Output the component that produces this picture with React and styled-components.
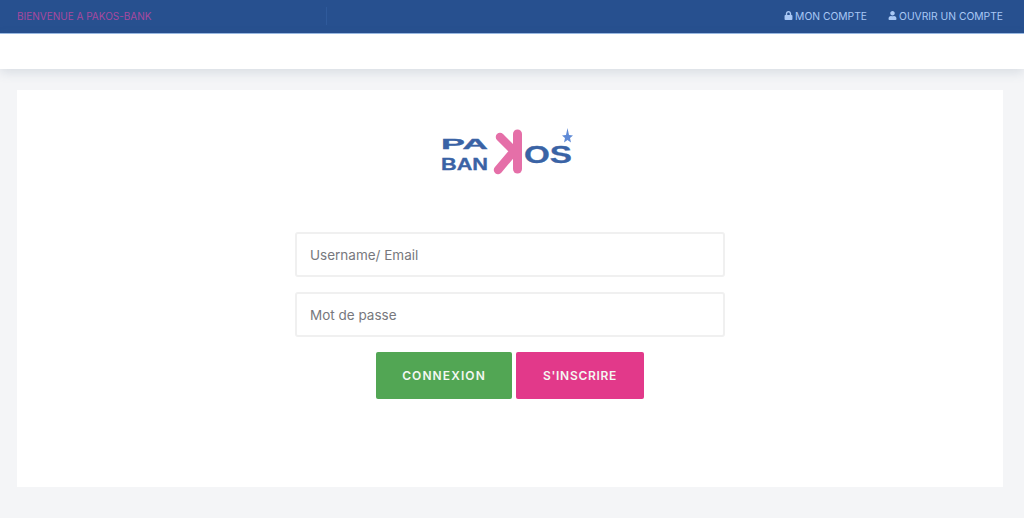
import styled, { createGlobalStyle } from 'styled-components';
import { FaLock, FaUser } from 'react-icons/fa';

const GlobalStyle = createGlobalStyle`
  body {
    margin: 0;
    background-color: #f4f5f7;
    font-family: Inter, "Open Sans", sans-serif;
  }
`;

function Logo() {
  return (
    <LogoSvg viewBox='0 0 135 48' width='135' height='48' role='img' aria-label='Pakos Bank'>
      <g fill='#3a63a5' stroke='#3a63a5' strokeWidth='0.3' fontFamily='"Liberation Sans", sans-serif' fontWeight='700'>
        <text x='1' y='21' fontSize='15' textLength='47' lengthAdjust='spacingAndGlyphs'>PA</text>
        <text x='1' y='42' fontSize='16' textLength='47' lengthAdjust='spacingAndGlyphs'>BAN</text>
        <text x='84' y='35' fontSize='23' textLength='48' lengthAdjust='spacingAndGlyphs'>OS</text>
      </g>
      <g stroke='#e56fa8' fill='none' strokeLinecap='round'>
        <path d='M60 9l14 14L58 42' strokeWidth='8.500' strokeLinejoin='round' />
        <path d='M77.500 6v35' strokeWidth='9' />
      </g>
      <path d='M127.500 0l1.500 7 4 .5-3 2.600 1 4.400-3.500-2.500-3.500 2.500 1-4.400-3-2.600 4-.5z' fill='#5f8ad6' />
    </LogoSvg>
  );
}

export default function App() {
  return (
    <>
      <GlobalStyle />
      <TopBar>
        <Welcome>BIENVENUE A PAKOS-BANK</Welcome>
        <TopDivider />
        <TopLinks>
          <TopLink href='#'>
            <FaLock size={9} />
            MON COMPTE
          </TopLink>
          <TopLink href='#'>
            <FaUser size={9} />
            OUVRIR UN COMPTE
          </TopLink>
        </TopLinks>
      </TopBar>
      <NavBar />
      <Main>
        <Card>
          <Logo />
          <Form>
            <Field placeholder='Username/ Email' />
            <Field placeholder='Mot de passe' type='password' />
            <Buttons>
              <ActionButton type='button' $bg='#52a654' $width={136} $spacing={1.1}>
                CONNEXION
              </ActionButton>
              <ActionButton type='button' $bg='#e2398a' $width={128} $spacing={0.7}>
                S&apos;INSCRIRE
              </ActionButton>
            </Buttons>
          </Form>
        </Card>
      </Main>
    </>
  );
}

const TopBar = styled.header`
  display: flex;
  align-items: center;
  height: 31px;
  padding: 0 21px 2px 17px;
  background-color: #27508f;
  border-bottom: 1px solid #9dbde6;
`;

const Welcome = styled.span`
  width: 309px;
  color: #a8499f;
  font-size: 10px;
  white-space: nowrap;
`;

const TopDivider = styled.div`
  width: 1px;
  height: 18px;
  background-color: #2f5a9b;
`;

const TopLinks = styled.nav`
  display: flex;
  gap: 21px;
  margin-left: auto;
`;

const TopLink = styled.a`
  display: flex;
  align-items: center;
  gap: 2px;
  color: #a9c8f5;
  font-size: 10.300px;
  text-decoration: none;
  white-space: nowrap;
`;

const NavBar = styled.div`
  height: 35px;
  background-color: #fff;
  box-shadow: 0 3px 12px rgba(80, 100, 130, 0.18);
`;

const Main = styled.main`
  padding: 21px 21px 31px 17px;
`;

const Card = styled.section`
  display: flex;
  flex-direction: column;
  align-items: center;
  height: 397px;
  padding-top: 38px;
  box-sizing: border-box;
  background-color: #fff;
`;

const LogoSvg = styled.svg`
  display: block;
  margin-right: 5px;
`;

const Form = styled.form`
  display: flex;
  flex-direction: column;
  align-items: center;
  gap: 15px;
  width: 430px;
  margin-top: 56px;
`;

const Field = styled.input`
  width: 100%;
  height: 45px;
  padding: 0 13px;
  box-sizing: border-box;
  background-color: #fff;
  border: 2px solid #f0f0f0;
  border-radius: 3px;
  font-family: inherit;
  font-size: 13.500px;
  outline: none;

  &::placeholder {
    color: #77787d;
    opacity: 1;
  }
`;

const Buttons = styled.div`
  display: flex;
  gap: 4px;
`;

const ActionButton = styled.button`
  width: ${(props) => props.$width}px;
  height: 47px;
  padding: 0;
  border: none;
  border-radius: 2px;
  background-color: ${(props) => props.$bg};
  color: #f4f7f2;
  font-family: inherit;
  font-size: 12px;
  font-weight: 600;
  letter-spacing: ${(props) => props.$spacing}px;
`;
